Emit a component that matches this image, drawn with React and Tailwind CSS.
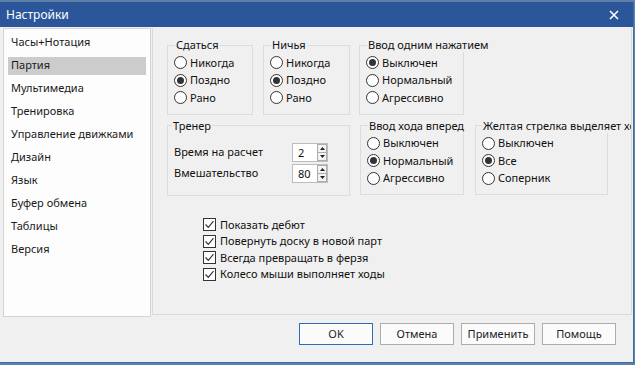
import React from 'react';

const menuItems = [
  'Часы+Нотация',
  'Партия',
  'Мультимедиа',
  'Тренировка',
  'Управление движками',
  'Дизайн',
  'Язык',
  'Буфер обмена',
  'Таблицы',
  'Версия',
];

const Radio = ({ label, checked }) => (
  <div className="flex items-center h-[17.5px]">
    <span className="w-[13px] h-[13px] rounded-full border border-[#333] bg-white flex items-center justify-center shrink-0">
      {checked && <span className="w-[7px] h-[7px] rounded-full bg-[#333]" />}
    </span>
    <span className="ml-[3px] whitespace-nowrap">{label}</span>
  </div>
);

const Check = ({ label }) => (
  <div className="flex items-center h-[16.5px]">
    <span className="w-[13px] h-[13px] border border-[#333] bg-white flex items-center justify-center shrink-0">
      <svg width="11" height="11" viewBox="0 0 11 11">
        <path d="M1.5 5.5 L4.3 8.3 L9.5 2.2" fill="none" stroke="#333" strokeWidth="1.2" />
      </svg>
    </span>
    <span className="ml-[4px] whitespace-nowrap">{label}</span>
  </div>
);

const Group = ({ title, className, legendClass = 'ml-[1px]', children }) => (
  <fieldset className={`min-w-0 shrink-0 border border-[#dcdcdc] ${className}`}>
    <legend className={`${legendClass} px-[1px] leading-[14px] whitespace-nowrap`}>{title}</legend>
    {children}
  </fieldset>
);

const Spin = ({ value }) => (
  <div className="flex shrink-0 h-[19px] w-[36px] border border-[#bdbdbd] bg-white">
    <div className="flex-1 pl-[5px] leading-[17px]">{value}</div>
    <div className="w-[10px] flex flex-col">
      <div className="flex-1 border border-[#adadad] bg-[#f3f3f3] flex items-center justify-center">
        <svg width="5" height="3" viewBox="0 0 5 3"><path d="M0 3 L2.5 0 L5 3 Z" fill="#222" /></svg>
      </div>
      <div className="flex-1 border border-t-0 border-[#adadad] bg-[#f3f3f3] flex items-center justify-center">
        <svg width="5" height="3" viewBox="0 0 5 3"><path d="M0 0 L2.5 3 L5 0 Z" fill="#222" /></svg>
      </div>
    </div>
  </div>
);

const Button = ({ children, primary }) => (
  <button
    type="button"
    className={`w-[74px] h-[22px] border bg-[#fbfbfb] text-[11px] text-[#222] ${primary ? 'border-[#2d6db5]' : 'border-[#adadad]'}`}
  >
    {children}
  </button>
);

const App = () => {
  return (
    <div
      className="w-[635px] h-[365px] overflow-hidden bg-[#5f7fa6] text-[11px] text-[#111]"
      style={{ fontFamily: '"Noto Sans", "DejaVu Sans", sans-serif' }}
    >
      <div className="mt-[2px] w-[634px] h-[361px] border-r border-b border-[#3a6fb0] bg-[#f0f0f0] flex flex-col">
        <div className="h-[25px] shrink-0 bg-[#2b579a] flex items-center justify-between pl-[6px] pr-[14px] text-white text-[12px]">
          <span>Настройки</span>
          <svg width="10" height="10" viewBox="0 0 10 10">
            <path d="M1 1 L9 9 M9 1 L1 9" stroke="white" strokeWidth="1.6" />
          </svg>
        </div>

        <div className="flex pt-[1px] pl-[3px]">
          <div className="w-[148px] h-[289px] border border-[#d4d4d4] bg-[#fdfdfd] pt-[2px]">
            {menuItems.map((item) => (
              <div key={item} className="h-[23px] px-[4px] flex items-center">
                <div
                  className={`w-full h-[18px] pl-[3px] flex items-center whitespace-nowrap text-[#1a1a1a] ${
                    item === 'Партия' ? 'bg-[#cccccc]' : ''
                  }`}
                >
                  {item}
                </div>
              </div>
            ))}
          </div>

          <div className="ml-[1px] w-[480px] h-[287px] border border-t-0 border-[#dadada] overflow-hidden pt-[10px] pl-[14px]">
            <div className="flex items-start">
              <Group title="Сдаться" className="w-[86px] pl-[6px] pt-[2px] pb-[7px]">
                <Radio label="Никогда" />
                <Radio label="Поздно" checked />
                <Radio label="Рано" />
              </Group>
              <Group title="Ничья" className="ml-[10px] w-[87px] pl-[6px] pt-[2px] pb-[7px]">
                <Radio label="Никогда" />
                <Radio label="Поздно" checked />
                <Radio label="Рано" />
              </Group>
              <Group title="Ввод одним нажатием" className="ml-[9px] w-[105px] pl-[6px] pt-[2px] pb-[7px]">
                <Radio label="Выключен" checked />
                <Radio label="Нормальный" />
                <Radio label="Агрессивно" />
              </Group>
            </div>

            <div className="flex items-start mt-[4px]">
              <Group title="Тренер" legendClass="-ml-[2px]" className="w-[183px] pl-[6px] pr-[21px] pt-[9px] pb-[11px]">
                <div className="flex items-center justify-between h-[21px]">
                  <span className="whitespace-nowrap">Время на расчет</span>
                  <Spin value="2" />
                </div>
                <div className="flex items-center justify-between h-[21px]">
                  <span className="whitespace-nowrap">Вмешательство</span>
                  <Spin value="80" />
                </div>
              </Group>
              <Group title="Ввод хода вперед" className="ml-[10px] w-[104px] pl-[6px] pt-[2px] pb-[7px]">
                <Radio label="Выключен" />
                <Radio label="Нормальный" checked />
                <Radio label="Агрессивно" />
              </Group>
              <Group title="Желтая стрелка выделяет ходы" legendClass="ml-0" className="ml-[11px] w-[133px] pl-[6px] pt-[2px] pb-[7px]">
                <Radio label="Выключен" />
                <Radio label="Все" checked />
                <Radio label="Соперник" />
              </Group>
            </div>

            <div className="mt-[21px] pl-[36px]">
              <Check label="Показать дебют" />
              <Check label="Повернуть доску в новой парт" />
              <Check label="Всегда превращать в ферзя" />
              <Check label="Колесо мыши выполняет ходы" />
            </div>
          </div>
        </div>

        <div className="flex justify-end gap-[7px] pr-[17px] mt-[6px]">
          <Button primary>OK</Button>
          <Button>Отмена</Button>
          <Button>Применить</Button>
          <Button>Помощь</Button>
        </div>
      </div>
    </div>
  );
};

export default App;
